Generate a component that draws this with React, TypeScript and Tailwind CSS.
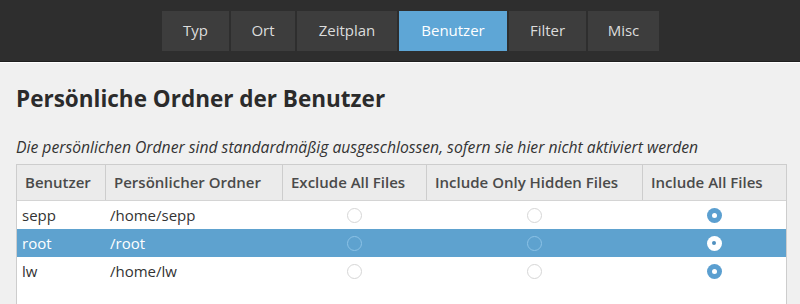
const tabs = ["Typ", "Ort", "Zeitplan", "Benutzer", "Filter", "Misc"];
const tabWidths = ["w-[67px]", "w-[64px]", "w-[100px]", "w-[108px]", "w-[77px]", "w-[71px]"];

const rows = [
  { user: "sepp", dir: "/home/sepp", choice: 2 },
  { user: "root", dir: "/root", choice: 2, selected: true },
  { user: "lw", dir: "/home/lw", choice: 2 },
];

const columns = [
  { label: "Benutzer", width: "w-[88px]" },
  { label: "Persönlicher Ordner", width: "w-[177px]" },
  { label: "Exclude All Files", width: "w-[144px]" },
  { label: "Include Only Hidden Files", width: "w-[216px]" },
  { label: "Include All Files", width: "flex-1" },
];

function Radio({ checked, onBlue }: { checked: boolean; onBlue?: boolean }) {
  if (checked) {
    return onBlue ? (
      <span className="flex h-[15px] w-[15px] items-center justify-center rounded-full bg-white">
        <span className="h-[4px] w-[4px] rounded-full bg-[#4f8fbf]" />
      </span>
    ) : (
      <span className="flex h-[15px] w-[15px] items-center justify-center rounded-full bg-[#5b9fd0]">
        <span className="h-[5px] w-[5px] rounded-full bg-white" />
      </span>
    );
  }
  return (
    <span
      className={
        onBlue
          ? "h-[15px] w-[15px] rounded-full border border-[#8cc2e6]"
          : "h-[15px] w-[15px] rounded-full border border-[#d6d6d6] bg-white"
      }
    />
  );
}

export default function App() {
  return (
    <div
      className="h-[304px] w-[800px] overflow-hidden bg-[#f0f0f0] text-[#3c3c3c]"
      style={{ fontFamily: '"Open Sans", "Noto Sans", sans-serif' }}
    >
      <div className="flex h-[62px] items-center justify-center border-b border-[#1e1e1e] bg-[#2e2e2e] pl-[21px]">
        <div className="flex gap-[2px]">
          {tabs.map((t, i) => (
            <div
              key={t}
              className={`${tabWidths[i]} flex h-[40px] items-center justify-center text-[15px] ${
                t === "Benutzer" ? "bg-[#5ea6d6] text-white" : "bg-[#3d3d3d] text-[#dcdcdc]"
              }`}
            >
              {t}
            </div>
          ))}
        </div>
      </div>
      <div className="border-t border-white" />
      <div className="px-[16px] pt-[22px]">
        <h1 className="text-[22.5px] font-bold leading-[28px] text-[#2b2b2b]">
          Persönliche Ordner der Benutzer
        </h1>
        <p className="mt-[24px] text-[15.7px] italic leading-[20px] text-[#333]">
          Die persönlichen Ordner sind standardmäßig ausgeschlossen, sofern sie hier nicht aktiviert werden
        </p>
        <div className="mt-[7px] mr-[-3px] h-[200px] border border-[#cdcdcd] bg-white">
          <div className="flex h-[36px] border-b border-[#d4d4d4] bg-[#ebebeb]">
            {columns.map((c, i) => (
              <div
                key={c.label}
                className={`${c.width} flex items-center whitespace-nowrap pl-[8px] text-[15px] font-semibold text-[#4a4a4a] ${
                  i > 0 ? "border-l border-[#cdcdcd]" : ""
                }`}
              >
                {c.label}
              </div>
            ))}
          </div>
          {rows.map((r) => (
            <div
              key={r.user}
              className={`flex h-[28px] items-center text-[15px] ${
                r.selected ? "bg-[#5ea2cf] text-white" : "text-[#333]"
              }`}
            >
              <div className="w-[88px] pl-[5px]">{r.user}</div>
              <div className="w-[177px] pl-[5px]">{r.dir}</div>
              {[0, 1, 2].map((j) => (
                <div
                  key={j}
                  className={`flex justify-center ${
                    j === 0 ? "w-[144px]" : j === 1 ? "w-[216px]" : "flex-1"
                  }`}
                >
                  <Radio checked={r.choice === j} onBlue={r.selected} />
                </div>
              ))}
            </div>
          ))}
        </div>
      </div>
    </div>
  );
}
